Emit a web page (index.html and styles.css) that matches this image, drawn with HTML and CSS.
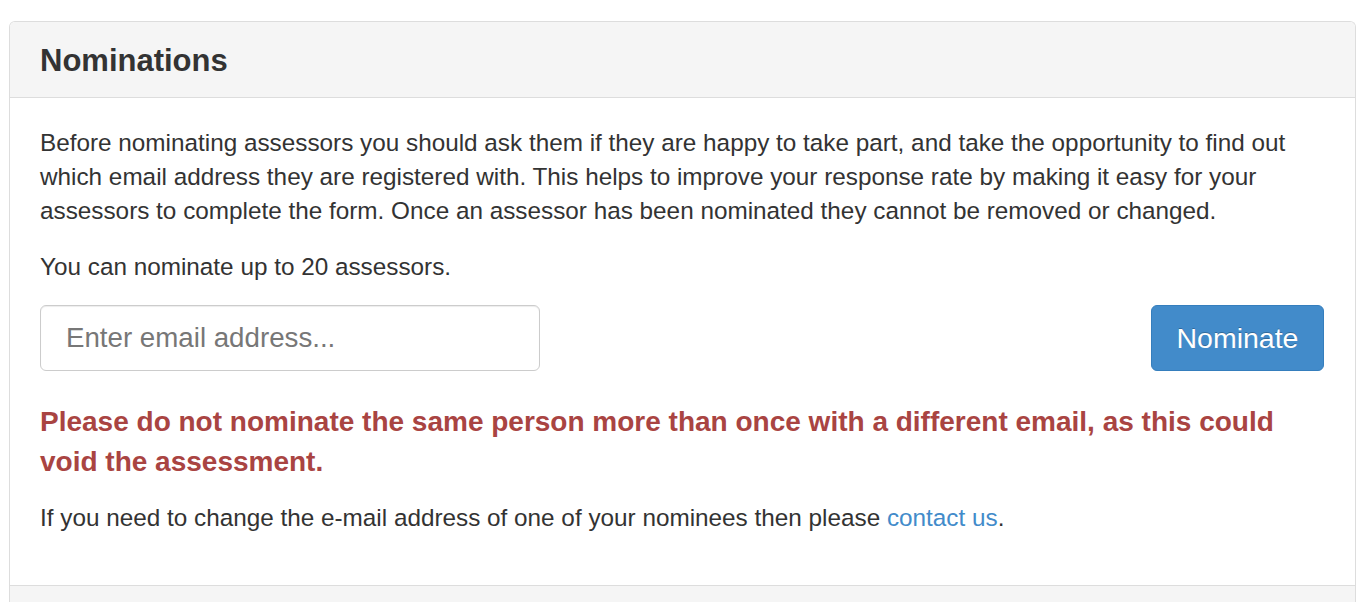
FILE: index.html
```html
<!DOCTYPE html>
<html>
<head>
<meta charset="utf-8">
<link rel="stylesheet" href="styles.css">
</head>
<body>
<div class="panel">
  <div class="panel-heading">
    <h3 class="panel-title">Nominations</h3>
  </div>
  <div class="panel-body">
    <p class="intro">Before nominating assessors you should ask them if they are happy to take part, and take the opportunity to find out which email address they are registered with. This helps to improve your response rate by making it easy for your assessors to complete the form. Once an assessor has been nominated they cannot be removed or changed.</p>
    <p class="limit">You can nominate up to 20 assessors.</p>
    <form class="nominate-form">
      <input class="email-input" type="text" placeholder="Enter email address...">
      <button class="btn-nominate" type="button">Nominate</button>
    </form>
    <p class="warning">Please do not nominate the same person more than once with a different email, as this could void the assessment.</p>
    <p class="contact">If you need to change the e-mail address of one of your nominees then please <a href="#">contact us</a>.</p>
  </div>
  <div class="panel-footer"></div>
</div>
</body>
</html>
```
FILE: styles.css
```css
html, body {
  margin: 0;
  padding: 0;
  background: #fff;
}
body {
  font-family: "Liberation Sans", Arial, sans-serif;
  color: #333;
  font-size: 24.3px;
  line-height: 34px;
}
.panel {
  margin: 21px 14px 0 9px;
  border: 1px solid #ddd;
  border-bottom: none;
  border-radius: 6px 6px 0 0;
  overflow: hidden;
}
.panel-heading {
  background: #f5f5f5;
  border-bottom: 1px solid #ddd;
  height: 75px;
  padding: 0 30px;
  display: flex;
  align-items: center;
}
.panel-title {
  margin: 2px 0 0;
  font-size: 31px;
  font-weight: bold;
  color: #333;
  line-height: 1;
}
.panel-body {
  padding: 28px 31px 50px 30px;
  border-bottom: 1px solid #ddd;
}
.panel-body p {
  margin: 0;
}
.intro {
  margin-bottom: 22px !important;
}
.limit {
  margin-bottom: 21px !important;
}
.nominate-form {
  display: flex;
  justify-content: space-between;
  align-items: center;
  margin: 0 0 31px;
}
.email-input {
  box-sizing: border-box;
  width: 500px;
  height: 66px;
  border: 1px solid #ccc;
  border-radius: 6px;
  padding: 0 25px;
  font-family: "Liberation Sans", Arial, sans-serif;
  font-size: 27.7px;
  color: #555;
  box-shadow: inset 0 1px 1px rgba(0,0,0,0.075);
  outline: none;
}
.email-input::placeholder {
  color: #777;
}
.btn-nominate {
  box-sizing: border-box;
  width: 173px;
  height: 66px;
  background: #428bca;
  border: 1px solid #357ebd;
  border-radius: 6px;
  color: #fff;
  font-family: "Liberation Sans", Arial, sans-serif;
  font-size: 28.5px;
  text-shadow: 0 -1px 0 rgba(0,0,0,0.25);
  padding: 0;
}
.warning {
  color: #a94442;
  font-weight: bold;
  font-size: 28px;
  line-height: 40px;
  margin-bottom: 19px !important;
}
.contact a {
  color: #428bca;
  text-decoration: none;
}
.panel-footer {
  background: #f5f5f5;
  height: 40px;
}
```
